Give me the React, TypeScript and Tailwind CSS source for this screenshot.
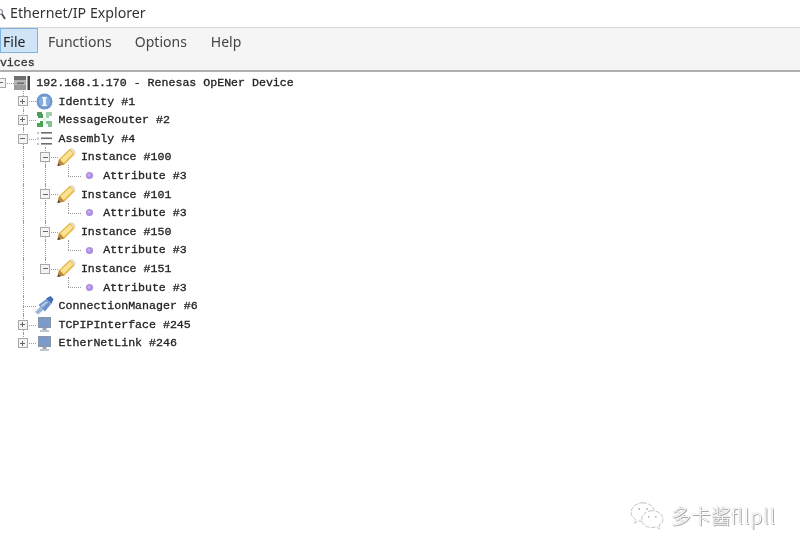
import type { ReactNode } from "react";

type TreeRow = {
  depth: number;
  label: string;
  icon: ReactNode;
  expander?: "plus" | "minus";
  pipes: number[]; // ancestor levels whose line keeps going through this row
  last?: boolean;
};

function DeviceIcon() {
  return (
    <svg width="17" height="14" viewBox="0 0 17 14">
      <rect x="0" y="0" width="12" height="14" fill="#b4b4b4" />
      <rect x="0" y="0" width="12" height="4" fill="#6f6f6f" />
      <rect x="0" y="9" width="12" height="5" fill="#9a9a9a" />
      <rect x="3" y="6.5" width="7" height="1.5" fill="#6a6a6a" />
      <rect x="12" y="0" width="1.5" height="14" fill="#ececec" />
      <rect x="13.5" y="0" width="2.5" height="14" fill="#454545" />
    </svg>
  );
}

function InfoIcon() {
  return (
    <svg width="17" height="17" viewBox="0 0 17 17">
      <circle cx="8.5" cy="8.5" r="8" fill="#6d98cf" />
      <circle cx="8.5" cy="8.5" r="5.8" fill="#86abdc" />
      <rect x="7" y="4" width="3" height="9" fill="#eef3fa" />
      <rect x="6" y="4" width="5" height="1.2" fill="#eef3fa" />
      <rect x="6" y="11.8" width="5" height="1.2" fill="#eef3fa" />
    </svg>
  );
}

function RouterIcon() {
  return (
    <svg width="17" height="17" viewBox="0 0 17 17">
      <path d="M1 1 H6 V3 H7 V7 H2 V5 H1 Z" fill="#4f9a5e" />
      <path d="M10 1 H16 V5 H13 V7 H10 Z" fill="#9fd0a9" />
      <path d="M1 12 H4 V10 H7 V16 H1 Z" fill="#45a654" />
      <path d="M10 10 H16 V16 H12 V13 H10 Z" fill="#84c491" />
      <rect x="7.5" y="7.5" width="2" height="2" fill="#c6e2cb" />
    </svg>
  );
}

function ListIcon() {
  return (
    <svg width="17" height="17" viewBox="0 0 17 17">
      <rect x="5" y="2" width="11" height="1.6" fill="#6b6f76" />
      <rect x="5" y="7.5" width="11" height="1.6" fill="#6b6f76" />
      <rect x="5" y="13" width="11" height="1.6" fill="#6b6f76" />
      <rect x="1" y="2" width="2" height="2" fill="#b9c3cf" />
      <rect x="1" y="7.5" width="2" height="2" fill="#b9c3cf" />
      <rect x="1" y="13" width="2" height="2" fill="#b9c3cf" />
    </svg>
  );
}

function PencilIcon() {
  return (
    <svg width="19" height="19" viewBox="0 0 19 19" className="shrink-0">
      <path d="M0.5 18 L2 11 L12.5 1 Q14.5 -0.2 16.5 1.2 L17.5 2.5 Q19 4.5 17.5 6.5 L7.5 16.5 Z" fill="#e9b94e" />
      <path d="M3.5 11.5 L13 2.5 L16 5.5 L6.5 15 Z" fill="#f8e394" />
      <path d="M13 1 Q14.5 -0.2 16.5 1.2 L17.5 2.5 Q19 4.5 17.5 6.5 Z" fill="#e6dfd0" />
      <path d="M0.5 18 L2 11 L7.5 16.5 Z" fill="#b98a45" />
      <path d="M0.5 18 L1.2 15 L3.5 17.3 Z" fill="#5c4526" />
    </svg>
  );
}

function DotIcon() {
  return (
    <svg width="17" height="9" viewBox="0 0 17 9">
      <circle cx="8.5" cy="4.5" r="3.6" fill="#b08fe0" />
      <circle cx="8" cy="4" r="1.5" fill="#c6aeea" />
    </svg>
  );
}

function PlugIcon() {
  return (
    <svg width="19" height="19" viewBox="0 0 19 19" className="shrink-0">
      <path d="M0 16 L5 11 L8.5 14 L3 18.5 Z" fill="#9db4da" />
      <path d="M3.5 9 L11.5 3 L16 8 L10 15.5 Z" fill="#6b90cb" />
      <path d="M11 2.5 L15.5 0 L18.5 3 L16.5 8 Z" fill="#456fb4" />
      <path d="M5.5 9.5 L11.5 5 L13 6.5 L7.5 11.5 Z" fill="#b3c9ea" />
    </svg>
  );
}

function MonitorIcon() {
  return (
    <svg width="17" height="17" viewBox="0 0 17 17">
      <rect x="2" y="1" width="13" height="11" fill="#8a97aa" />
      <rect x="3.5" y="2.5" width="10" height="8" fill="#7a9ccb" />
      <rect x="6.5" y="12" width="4" height="2" fill="#9aa4b1" />
      <rect x="4" y="14" width="9" height="2" fill="#c0c6d0" />
    </svg>
  );
}

const rows: TreeRow[] = [
  { depth: 0, label: "192.168.1.170 - Renesas OpENer Device", icon: <DeviceIcon />, expander: "minus", pipes: [], last: true },
  { depth: 1, label: "Identity #1", icon: <InfoIcon />, expander: "plus", pipes: [] },
  { depth: 1, label: "MessageRouter #2", icon: <RouterIcon />, expander: "plus", pipes: [] },
  { depth: 1, label: "Assembly #4", icon: <ListIcon />, expander: "minus", pipes: [] },
  { depth: 2, label: "Instance #100", icon: <PencilIcon />, expander: "minus", pipes: [1] },
  { depth: 3, label: "Attribute #3", icon: <DotIcon />, pipes: [1, 2], last: true },
  { depth: 2, label: "Instance #101", icon: <PencilIcon />, expander: "minus", pipes: [1] },
  { depth: 3, label: "Attribute #3", icon: <DotIcon />, pipes: [1, 2], last: true },
  { depth: 2, label: "Instance #150", icon: <PencilIcon />, expander: "minus", pipes: [1] },
  { depth: 3, label: "Attribute #3", icon: <DotIcon />, pipes: [1, 2], last: true },
  { depth: 2, label: "Instance #151", icon: <PencilIcon />, expander: "minus", pipes: [1], last: true },
  { depth: 3, label: "Attribute #3", icon: <DotIcon />, pipes: [1], last: true },
  { depth: 1, label: "ConnectionManager #6", icon: <PlugIcon />, pipes: [] },
  { depth: 1, label: "TCPIPInterface #245", icon: <MonitorIcon />, expander: "plus", pipes: [] },
  { depth: 1, label: "EtherNetLink #246", icon: <MonitorIcon />, expander: "plus", pipes: [], last: true },
];

function Row({ row }: { row: TreeRow }) {
  const levels = Array.from({ length: row.depth }, (_, i) => i);
  return (
    <div className="flex h-[18.6px] items-center">
      {levels.map((level) => (
        <div key={level} className="relative h-full w-[22.3px] shrink-0">
          {row.pipes.includes(level) && (
            <div className="absolute -inset-y-px left-1/2 border-l border-dotted border-[#9a9a9a]" />
          )}
        </div>
      ))}
      <div className="relative h-full w-[22.3px] shrink-0">
        {row.depth > 0 && (
          <div
            className={
              row.last
                ? "absolute -top-px h-[calc(50%+1px)] left-1/2 border-l border-dotted border-[#9a9a9a]"
                : "absolute -inset-y-px left-1/2 border-l border-dotted border-[#9a9a9a]"
            }
          />
        )}
        <div className="absolute top-1/2 left-1/2 right-[-2px] border-t border-dotted border-[#9a9a9a]" />
        {row.expander && (
          <div className="absolute top-1/2 left-1/2 flex h-[10px] w-[10px] -translate-x-[5px] -translate-y-[5px] items-center justify-center border border-[#a3a9ad] bg-[#f4f4f4]">
            <div className="h-px w-[5px] bg-[#666]" />
            {row.expander === "plus" && <div className="absolute h-[5px] w-px bg-[#666]" />}
          </div>
        )}
      </div>
      <div className="ml-[2px] flex w-[17px] shrink-0 items-center justify-center">{row.icon}</div>
      <span className="ml-[5.5px] whitespace-pre font-['Liberation_Mono',monospace] text-[11.6px] leading-none text-[#222] [-webkit-text-stroke:0.3px_#222]">
        {row.label}
      </span>
    </div>
  );
}

function WeChatMark() {
  return (
    <svg width="36" height="30" viewBox="0 0 38 34" fill="none" stroke="#b4b4b4" strokeWidth="0.9" strokeDasharray="5 1.5">
      <path d="M15 2 C7 2 1 7 1 13 C1 16.5 3 19 6 21 L4.5 25 L9.5 22.5 C11 23 12 23 13 23" />
      <path d="M14 2 C20 2 25 5 27 10" />
      <path d="M25 11 C18 11 13 15.5 13 21 C13 26.5 18 30 25 30 C27 30 28 29.7 29.5 29.3 L33.5 32 L32.5 27.5 C35.5 25.8 37 23.5 37 20.8 C37 15.5 32 11 25 11 Z" />
      <circle cx="10" cy="9" r="1" fill="#a8a8a8" stroke="none" />
      <circle cx="19" cy="9" r="1" fill="#a8a8a8" stroke="none" />
      <circle cx="21" cy="18" r="0.9" fill="#a8a8a8" stroke="none" />
      <circle cx="29" cy="18" r="0.9" fill="#a8a8a8" stroke="none" />
    </svg>
  );
}

export default function App() {
  return (
    <div className="relative h-[554px] w-[800px] overflow-hidden bg-white">
      <div className="blur-[0.4px]">
        {/* Title bar */}
        <div className="flex h-[27px] items-center bg-white">
          <svg className="ml-[-2px] shrink-0" width="9" height="12" viewBox="0 0 9 12" fill="none">
            <circle cx="2" cy="4" r="2.5" stroke="#7f8a96" strokeWidth="1.2" />
            <path d="M4 6 L7 11" stroke="#4d4d4d" strokeWidth="1.8" />
          </svg>
          <span className="ml-[3px] font-['Noto_Sans',sans-serif] text-[14.2px] leading-none text-[#333]">
            Ethernet/IP Explorer
          </span>
        </div>

        {/* Menu bar */}
        <div className="border-t border-[#d9d9d9] bg-[#f5f5f5]">
          <div className="flex h-[26px] items-start font-['Noto_Sans',sans-serif] text-[14px] text-[#444]">
            <div className="flex h-[25px] w-[38px] items-center border border-[#7fb2dc] bg-[#cfe5f7] pl-[2px] pt-[2px] text-[#222]">File</div>
            <div className="ml-[10px] flex h-[27px] items-center">Functions</div>
            <div className="ml-[23px] flex h-[27px] items-center">Options</div>
            <div className="ml-[24px] flex h-[27px] items-center">Help</div>
          </div>
          <div className="ml-[-14px] flex h-[16px] items-center pt-[2px] font-['Liberation_Mono',monospace] text-[11.6px] leading-none text-[#333] [-webkit-text-stroke:0.3px_#333]">
            Devices
          </div>
        </div>
        <div className="h-[2px] bg-[#b0b0b0]" />

        {/* Tree */}
        <div className="ml-[-10.5px] pt-[1.5px]">
          {rows.map((row, i) => (
            <Row key={i} row={row} />
          ))}
        </div>
      </div>

      {/* Watermark */}
      <div className="absolute right-[24px] bottom-[23px] flex items-center gap-[6px] blur-[0.3px]">
        <WeChatMark />
        <span className="font-['Noto_Sans_CJK_SC','Noto_Sans',sans-serif] text-[20px] leading-none font-light text-white [text-shadow:0_0_1px_#888,1px_1px_0_#aaa]">
          多卡酱<span className="tracking-[1px]">fllpll</span>
        </span>
      </div>
    </div>
  );
}
